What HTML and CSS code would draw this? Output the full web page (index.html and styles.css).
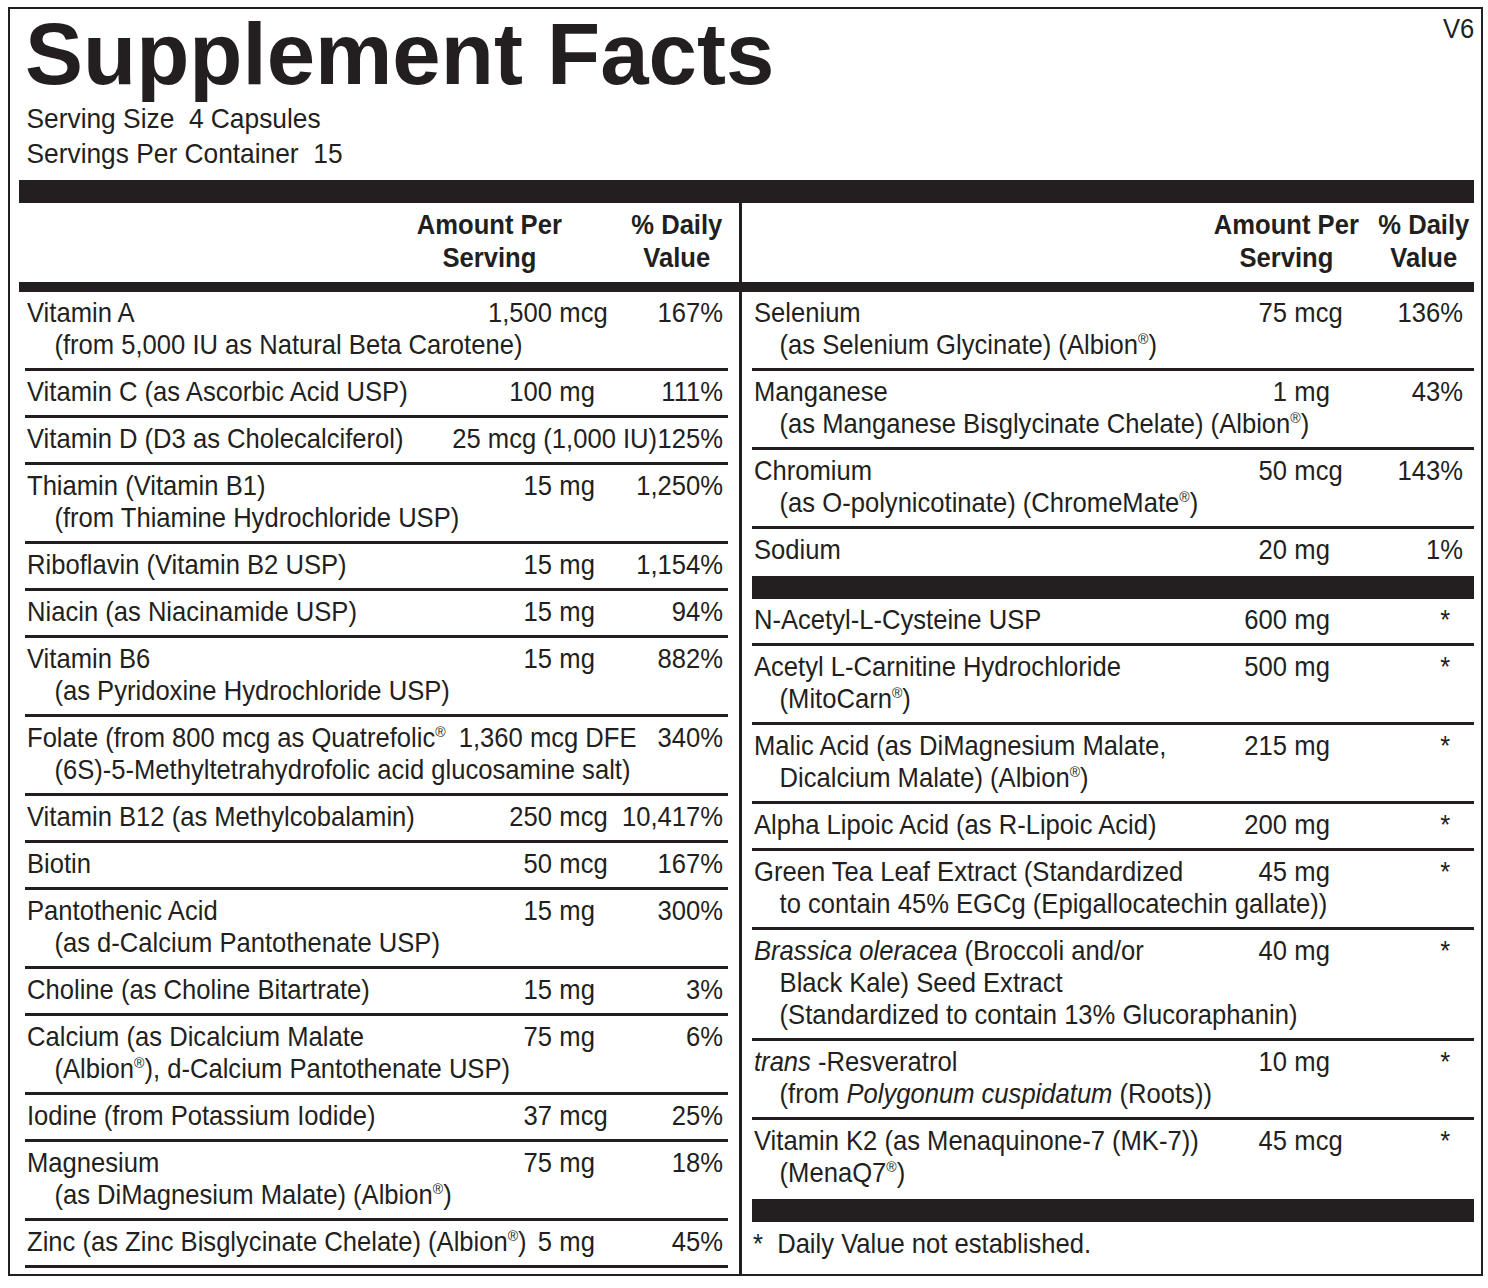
FILE: index.html
```html
<!DOCTYPE html>
<html lang="en">
<head>
    <meta charset="UTF-8">
    <meta name="viewport" content="width=device-width, initial-scale=1.0">
    <title>Supplement Facts</title>
    <link rel="stylesheet" href="styles.css">
</head>
<body>
    <div class="label">
        <div class="top">
            <h1>Supplement Facts</h1>
            <span class="version">V6</span>
        </div>
        <p class="serving">Serving Size&nbsp; 4 Capsules<br>Servings Per Container&nbsp; 15</p>
        <div class="bar"></div>

        <div class="columns">
            <div class="col col-left">
                <div class="col-head">
                    <div class="h-amt">Amount Per<br>Serving</div>
                    <div class="h-dv">% Daily<br>Value</div>
                </div>
                <div class="bar-mid"></div>
                <ul class="rows">
                    <li class="row">
                        <div class="line"><span class="name">Vitamin A</span><span class="amt"><span class="num">1,500</span><span class="unit">mcg</span></span><span class="dv">167%</span></div>
                        <div class="sub">(from 5,000 IU as Natural Beta Carotene)</div>
                    </li>
                    <li class="row">
                        <div class="line"><span class="name">Vitamin C (as Ascorbic Acid USP)</span><span class="amt"><span class="num">100</span><span class="unit">mg</span></span><span class="dv">111%</span></div>
                    </li>
                    <li class="row">
                        <div class="line"><span class="name">Vitamin D (D3 as Cholecalciferol)</span><span class="amt free">25 mcg (1,000 IU)</span><span class="dv dv-tight">125%</span></div>
                    </li>
                    <li class="row">
                        <div class="line"><span class="name">Thiamin (Vitamin B1)</span><span class="amt"><span class="num">15</span><span class="unit">mg</span></span><span class="dv">1,250%</span></div>
                        <div class="sub">(from Thiamine Hydrochloride USP)</div>
                    </li>
                    <li class="row">
                        <div class="line"><span class="name">Riboflavin (Vitamin B2 USP)</span><span class="amt"><span class="num">15</span><span class="unit">mg</span></span><span class="dv">1,154%</span></div>
                    </li>
                    <li class="row">
                        <div class="line"><span class="name">Niacin (as Niacinamide USP)</span><span class="amt"><span class="num">15</span><span class="unit">mg</span></span><span class="dv">94%</span></div>
                    </li>
                    <li class="row">
                        <div class="line"><span class="name">Vitamin B6</span><span class="amt"><span class="num">15</span><span class="unit">mg</span></span><span class="dv">882%</span></div>
                        <div class="sub">(as Pyridoxine Hydrochloride USP)</div>
                    </li>
                    <li class="row">
                        <div class="line"><span class="name">Folate (from 800 mcg as Quatrefolic<sup>®</sup></span><span class="amt free">1,360 mcg DFE</span><span class="dv dv-mid">340%</span></div>
                        <div class="sub">(6S)-5-Methyltetrahydrofolic acid glucosamine salt)</div>
                    </li>
                    <li class="row">
                        <div class="line"><span class="name">Vitamin B12 (as Methylcobalamin)</span><span class="amt"><span class="num">250</span><span class="unit">mcg</span></span><span class="dv">10,417%</span></div>
                    </li>
                    <li class="row">
                        <div class="line"><span class="name">Biotin</span><span class="amt"><span class="num">50</span><span class="unit">mcg</span></span><span class="dv">167%</span></div>
                    </li>
                    <li class="row">
                        <div class="line"><span class="name">Pantothenic Acid</span><span class="amt"><span class="num">15</span><span class="unit">mg</span></span><span class="dv">300%</span></div>
                        <div class="sub">(as d-Calcium Pantothenate USP)</div>
                    </li>
                    <li class="row">
                        <div class="line"><span class="name">Choline (as Choline Bitartrate)</span><span class="amt"><span class="num">15</span><span class="unit">mg</span></span><span class="dv">3%</span></div>
                    </li>
                    <li class="row">
                        <div class="line"><span class="name">Calcium (as Dicalcium Malate</span><span class="amt"><span class="num">75</span><span class="unit">mg</span></span><span class="dv">6%</span></div>
                        <div class="sub">(Albion<sup>®</sup>), d-Calcium Pantothenate USP)</div>
                    </li>
                    <li class="row">
                        <div class="line"><span class="name">Iodine (from Potassium Iodide)</span><span class="amt"><span class="num">37</span><span class="unit">mcg</span></span><span class="dv">25%</span></div>
                    </li>
                    <li class="row">
                        <div class="line"><span class="name">Magnesium</span><span class="amt"><span class="num">75</span><span class="unit">mg</span></span><span class="dv">18%</span></div>
                        <div class="sub">(as DiMagnesium Malate) (Albion<sup>®</sup>)</div>
                    </li>
                    <li class="row">
                        <div class="line"><span class="name">Zinc (as Zinc Bisglycinate Chelate) (Albion<sup>®</sup>)</span><span class="amt"><span class="num">5</span><span class="unit">mg</span></span><span class="dv">45%</span></div>
                    </li>
                </ul>
            </div>

            <div class="col col-right">
                <div class="col-head">
                    <div class="h-amt">Amount Per<br>Serving</div>
                    <div class="h-dv">% Daily<br>Value</div>
                </div>
                <div class="bar-mid"></div>
                <ul class="rows">
                    <li class="row">
                        <div class="line"><span class="name">Selenium</span><span class="amt"><span class="num">75</span><span class="unit">mcg</span></span><span class="dv">136%</span></div>
                        <div class="sub">(as Selenium Glycinate) (Albion<sup>®</sup>)</div>
                    </li>
                    <li class="row">
                        <div class="line"><span class="name">Manganese</span><span class="amt"><span class="num">1</span><span class="unit">mg</span></span><span class="dv">43%</span></div>
                        <div class="sub">(as Manganese Bisglycinate Chelate) (Albion<sup>®</sup>)</div>
                    </li>
                    <li class="row">
                        <div class="line"><span class="name">Chromium</span><span class="amt"><span class="num">50</span><span class="unit">mcg</span></span><span class="dv">143%</span></div>
                        <div class="sub">(as O-polynicotinate) (ChromeMate<sup>®</sup>)</div>
                    </li>
                    <li class="row row-end">
                        <div class="line"><span class="name">Sodium</span><span class="amt"><span class="num">20</span><span class="unit">mg</span></span><span class="dv">1%</span></div>
                    </li>
                </ul>
                <div class="bar"></div>
                <ul class="rows">
                    <li class="row">
                        <div class="line"><span class="name">N-Acetyl-L-Cysteine USP</span><span class="amt"><span class="num">600</span><span class="unit">mg</span></span><span class="dv star">*</span></div>
                    </li>
                    <li class="row">
                        <div class="line"><span class="name">Acetyl L-Carnitine Hydrochloride</span><span class="amt"><span class="num">500</span><span class="unit">mg</span></span><span class="dv star">*</span></div>
                        <div class="sub">(MitoCarn<sup>®</sup>)</div>
                    </li>
                    <li class="row">
                        <div class="line"><span class="name">Malic Acid (as DiMagnesium Malate,</span><span class="amt"><span class="num">215</span><span class="unit">mg</span></span><span class="dv star">*</span></div>
                        <div class="sub">Dicalcium Malate) (Albion<sup>®</sup>)</div>
                    </li>
                    <li class="row">
                        <div class="line"><span class="name">Alpha Lipoic Acid (as R-Lipoic Acid)</span><span class="amt"><span class="num">200</span><span class="unit">mg</span></span><span class="dv star">*</span></div>
                    </li>
                    <li class="row">
                        <div class="line"><span class="name">Green Tea Leaf Extract (Standardized</span><span class="amt"><span class="num">45</span><span class="unit">mg</span></span><span class="dv star">*</span></div>
                        <div class="sub">to contain 45% EGCg (Epigallocatechin gallate))</div>
                    </li>
                    <li class="row">
                        <div class="line"><span class="name"><i>Brassica oleracea</i> (Broccoli and/or</span><span class="amt"><span class="num">40</span><span class="unit">mg</span></span><span class="dv star">*</span></div>
                        <div class="sub">Black Kale) Seed Extract</div>
                        <div class="sub">(Standardized to contain 13% Glucoraphanin)</div>
                    </li>
                    <li class="row">
                        <div class="line"><span class="name"><i>trans</i> -Resveratrol</span><span class="amt"><span class="num">10</span><span class="unit">mg</span></span><span class="dv star">*</span></div>
                        <div class="sub">(from <i>Polygonum cuspidatum</i> (Roots))</div>
                    </li>
                    <li class="row row-end">
                        <div class="line"><span class="name">Vitamin K2 (as Menaquinone-7 (MK-7))</span><span class="amt"><span class="num">45</span><span class="unit">mcg</span></span><span class="dv star">*</span></div>
                        <div class="sub">(MenaQ7<sup>®</sup>)</div>
                    </li>
                </ul>
                <div class="bar"></div>
                <p class="note">*&nbsp; Daily Value not established.</p>
            </div>
        </div>
    </div>
</body>
</html>
```

FILE: styles.css
```css
* {
    box-sizing: border-box;
}

body {
    margin: 0;
    background: #fff;
    color: #231f20;
    font-family: "Liberation Sans", Arial, sans-serif;
    font-size: 28px;
}

/* the label type is Helvetica squeezed to ~91% width */
.name, .sub, .unit, .note {
    transform: scaleX(.914);
    transform-origin: left center;
}

.num, .dv, .amt.free, .version {
    transform: scaleX(.914);
    transform-origin: right center;
}

.h-amt, .h-dv {
    transform: scaleX(.914);
    transform-origin: center;
}

.label {
    width: 1475px;
    margin: 7px 0 0 8px;
    padding: 0 7px 0 9px;
    border: 2px solid #231f20;
}

.top {
    display: flex;
    justify-content: space-between;
    align-items: flex-start;
}

.top h1 {
    margin: 0 0 0 6px;
    padding-top: 2px;
    font-size: 87px;
    line-height: 86px;
    font-weight: bold;
}

.version {
    margin-top: 4px;
    line-height: 31px;
}

.serving {
    margin: 4px 0 0;
    padding-left: 8px;
    line-height: 35px;
    transform: scaleX(.94);
    transform-origin: left center;
}

.bar {
    height: 23px;
    margin-top: 9px;
    background: #231f20;
}

.col .bar {
    margin-top: 0;
    margin-left: 10px;
}

.columns {
    display: grid;
    grid-template-columns: 720px minmax(0, 1fr);
}

.col-right {
    border-left: 3px solid #231f20;
}

.col-head {
    height: 79px;
    padding-top: 5px;
    display: flex;
    justify-content: flex-end;
    font-weight: bold;
    line-height: 33px;
    text-align: center;
}

.col-left .col-head {
    padding-right: 12px;
}

.col-left .h-amt {
    margin-right: 59px;
}

.col-right .col-head {
    padding-right: 0;
}

.col-right .h-amt {
    margin-right: 9px;
}

.bar-mid {
    height: 10px;
    background: #231f20;
}

.rows {
    list-style: none;
    margin: 0;
    padding: 0 11px 0 6px;
}

.col-right .rows {
    padding: 0 0 0 10px;
}

.row {
    padding: 5px 5px 7px 2px;
    line-height: 32px;
    border-bottom: 3px solid #231f20;
}

.col-right .row {
    padding-right: 11px;
}

.row-end {
    border-bottom-color: transparent;
}

.line {
    display: flex;
}

.name {
    flex: 1;
    min-width: 0;
    white-space: nowrap;
}

.amt {
    flex: none;
    width: 163px;
    display: flex;
    white-space: nowrap;
}

.num {
    width: 92px;
    text-align: right;
}

.col-right .num {
    width: 87px;
}

.unit {
    padding-left: 8px;
}

.amt.free {
    width: auto;
    display: block;
}

/* flex-end so long values spill to the left, not past the edge */
.dv {
    flex: none;
    width: 100px;
    display: flex;
    justify-content: flex-end;
    white-space: nowrap;
}

.dv-tight {
    width: 66px;
}

.dv-mid {
    width: 86px;
}

.dv.star {
    padding-right: 14px;
}

.sub {
    padding-left: 30px;
    white-space: nowrap;
}

.col-right .sub {
    padding-left: 28px;
}

sup {
    font-size: 55%;
    line-height: 0;
    vertical-align: 0.65em;
}

.note {
    margin: 0;
    padding: 6px 0 14px 12px;
    line-height: 32px;
}
```
